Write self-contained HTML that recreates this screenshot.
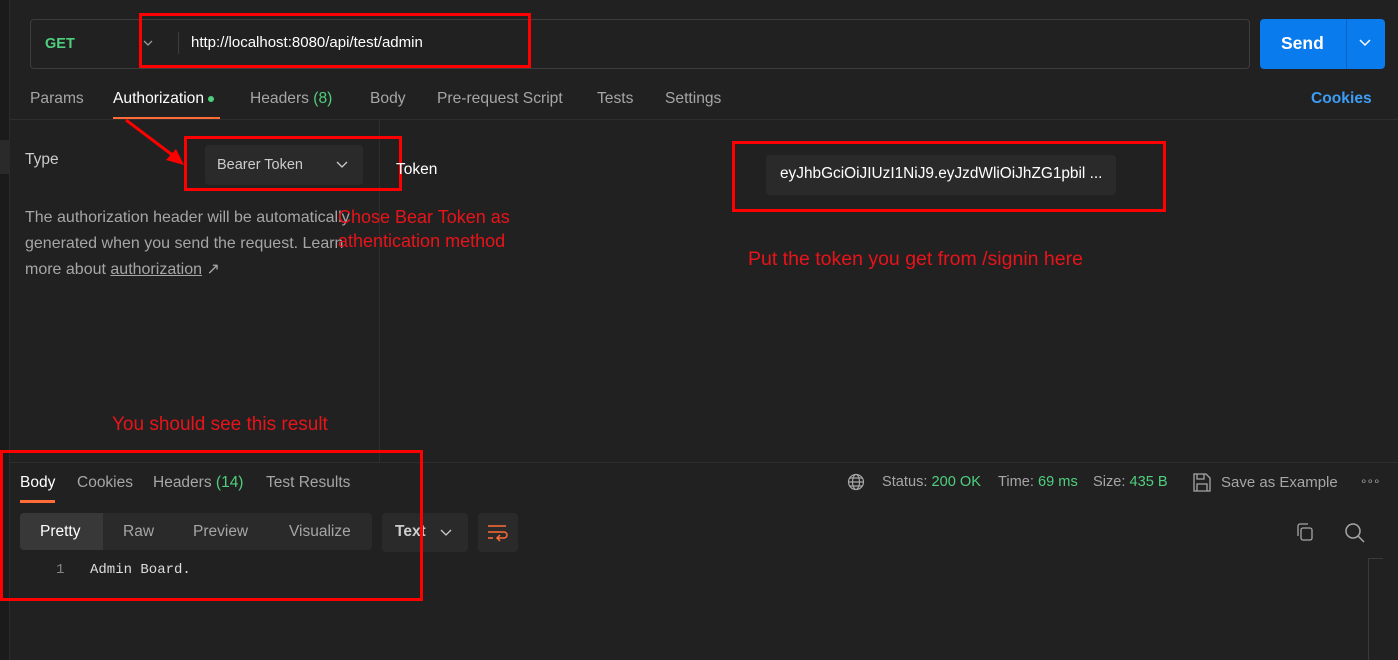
<!DOCTYPE html>
<html><head><style>
*{margin:0;padding:0;box-sizing:border-box}
body{width:1398px;height:660px;background:#212121;font-family:"Liberation Sans",sans-serif;color:#a6a6a6;position:relative;overflow:hidden;font-size:14px}
.a{position:absolute;white-space:nowrap}
.red{position:absolute;border:3px solid #f00}
.g{color:#4fcf7e}
.ann{position:absolute;color:#e8141a;white-space:nowrap}
.t{font-size:15.6px}
</style></head><body>
<div class="a" style="left:0;top:0;width:10px;height:660px;background:#1b1b1b;border-right:1px solid #2c2c2c"></div>
<div class="a" style="left:0;top:140px;width:10px;height:34px;background:#2a2a2a"></div>
<div class="a" style="left:30px;top:19px;width:1220px;height:50px;border:1px solid #3d3d3d;border-radius:4px"></div>
<div class="a" style="left:45px;top:36px;color:#4fcf7e;font-weight:bold;font-size:14.5px">GET</div>
<svg class="a" style="left:142px;top:38px" width="12" height="10" fill="none" stroke="#999" stroke-width="1.3"><path d="M2 3l4 4 4-4"/></svg>
<div class="a" style="left:178px;top:32px;width:1px;height:22px;background:#3d3d3d"></div>
<div class="a" style="left:191px;top:34px;color:#fff;font-size:15px">http://localhost:8080/api/test/admin</div>
<div class="red" style="left:139px;top:13px;width:392px;height:55px"></div>
<div class="a" style="left:1260px;top:19px;width:125px;height:50px;background:#097bed;border-radius:4px"></div>
<div class="a" style="left:1346px;top:19px;width:1px;height:50px;background:#0a64c0"></div>
<div class="a" style="left:1281px;top:33px;color:#fff;font-weight:bold;font-size:17.5px">Send</div>
<svg class="a" style="left:1358px;top:38px" width="14" height="10" fill="none" stroke="#fff" stroke-width="1.5"><path d="M2 2l5 5 5-5"/></svg>

<div class="a t" style="left:30px;top:90px">Params</div>
<div class="a t" style="left:113px;top:90px;color:#fff">Authorization <span style="display:inline-block;width:6px;height:6px;border-radius:3px;background:#4fcf7e;vertical-align:middle"></span></div>
<div class="a" style="left:113px;top:117px;width:107px;height:3px;background:#ff6c37"></div>
<div class="a t" style="left:250px;top:90px">Headers <span class="g">(8)</span></div>
<div class="a t" style="left:370px;top:90px">Body</div>
<div class="a t" style="left:437px;top:90px">Pre-request Script</div>
<div class="a t" style="left:597px;top:90px">Tests</div>
<div class="a t" style="left:665px;top:90px">Settings</div>
<div class="a t" style="left:1311px;top:90px;color:#3d9cf5;font-weight:bold">Cookies</div>
<div class="a" style="left:10px;top:119px;width:1388px;height:1px;background:#2e2e2e"></div>
<div class="a" style="left:379px;top:120px;width:1px;height:342px;background:#2e2e2e"></div>

<div class="a" style="left:25px;top:151px;font-size:15.5px;color:#ccc">Type</div>
<div class="a" style="left:205px;top:145px;width:158px;height:40px;background:#2a2a2a;border-radius:4px"></div>
<div class="a" style="left:217px;top:157px;font-size:14.5px;color:#ccc">Bearer Token</div>
<svg class="a" style="left:335px;top:160px" width="14" height="10" fill="none" stroke="#ccc" stroke-width="1.3"><path d="M2 2l5 5 5-5"/></svg>
<div class="red" style="left:184px;top:136px;width:218px;height:55px"></div>
<svg class="a" style="left:120px;top:115px" width="70" height="55"><line x1="6" y1="5" x2="55" y2="42" stroke="#f00" stroke-width="3"/><polygon points="64,50 46,45 56,34" fill="#f00"/></svg>
<div class="a" style="left:25px;top:205px;font-size:16px;line-height:26px;color:#a6a6a6">The authorization header will be automatically<br>generated when you send the request. Learn<br>more about <span style="text-decoration:underline">authorization</span> &#8599;</div>
<div class="ann" style="left:338px;top:205px;line-height:24px;font-size:18px">Chose Bear Token as<br>athentication method</div>

<div class="a" style="left:396px;top:161px;font-size:15.5px;color:#fff">Token</div>
<div class="a" style="left:766px;top:155px;width:350px;height:40px;background:#2a2a2a;border-radius:4px"></div>
<div class="a" style="left:780px;top:165px;font-size:15.4px;color:#fff">eyJhbGciOiJIUzI1NiJ9.eyJzdWliOiJhZG1pbil ...</div>
<div class="red" style="left:732px;top:141px;width:434px;height:71px"></div>
<div class="ann" style="left:748px;top:248px;font-size:19.5px">Put the token you get from /signin here</div>
<div class="ann" style="left:112px;top:414px;font-size:19px">You should see this result</div>

<div class="a" style="left:10px;top:462px;width:1388px;height:1px;background:#2e2e2e"></div>
<div class="a" style="left:20px;top:474px;font-size:15.5px;color:#fff">Body</div>
<div class="a" style="left:20px;top:500px;width:35px;height:3px;background:#ff6c37"></div>
<div class="a" style="left:77px;top:474px;font-size:15.5px">Cookies</div>
<div class="a" style="left:153px;top:474px;font-size:15.5px">Headers <span class="g">(14)</span></div>
<div class="a" style="left:266px;top:474px;font-size:15.5px">Test Results</div>
<div class="a" style="left:20px;top:513px;width:352px;height:37px;background:#2a2a2a;border-radius:4px"></div>
<div class="a" style="left:20px;top:513px;width:83px;height:37px;background:#383838;border-radius:4px 0 0 4px"></div>
<div class="a" style="left:40px;top:523px;font-size:15.5px;color:#fff">Pretty</div>
<div class="a" style="left:123px;top:523px;font-size:15.5px">Raw</div>
<div class="a" style="left:193px;top:523px;font-size:15.5px">Preview</div>
<div class="a" style="left:289px;top:523px;font-size:15.5px">Visualize</div>
<div class="a" style="left:382px;top:513px;width:86px;height:39px;background:#2a2a2a;border-radius:4px"></div>
<div class="a" style="left:395px;top:523px;font-size:15.5px;color:#ccc;font-weight:bold">Text</div>
<svg class="a" style="left:439px;top:528px" width="14" height="10" fill="none" stroke="#ccc" stroke-width="1.3"><path d="M2 2l5 5 5-5"/></svg>
<div class="a" style="left:478px;top:513px;width:40px;height:39px;background:#2a2a2a;border-radius:4px"></div>
<svg class="a" style="left:486px;top:522px" width="24" height="22" fill="none" stroke="#ff6c37" stroke-width="1.5"><path d="M2 4h18M2 10h16a3 3 0 010 6h-6M2 16h5M14 13l-3 3 3 3"/></svg>
<div class="a" style="left:56px;top:562px;font-family:'Liberation Mono',monospace;font-size:14px;color:#888">1</div>
<div class="a" style="left:90px;top:562px;font-family:'Liberation Mono',monospace;font-size:14px;color:#ddd">Admin Board.</div>
<div class="red" style="left:0;top:450px;width:423px;height:151px"></div>

<svg class="a" style="left:847px;top:473px" width="18" height="18" fill="none" stroke="#a6a6a6" stroke-width="1.2"><circle cx="9" cy="9" r="7.5"/><ellipse cx="9" cy="9" rx="3.5" ry="7.5"/><path d="M1.5 9h15M3 5h12M3 13h12"/></svg>
<div class="a" style="left:882px;top:474px;font-size:14.6px">Status: <span class="g">200 OK</span></div>
<div class="a" style="left:998px;top:474px;font-size:14.6px">Time: <span class="g">69 ms</span></div>
<div class="a" style="left:1093px;top:474px;font-size:14.6px">Size: <span class="g">435 B</span></div>
<svg class="a" style="left:1193px;top:473px" width="18" height="19" fill="none" stroke="#a6a6a6" stroke-width="1.3"><path d="M1 1h12l4 4v13H1z M4 1v5h7V1 M4 18v-7h10v7"/></svg>
<div class="a" style="left:1221px;top:474px;font-size:15px">Save as Example</div>
<div class="a" style="left:1360px;top:474px;font-size:12px;letter-spacing:-1px">&#8728;&#8728;&#8728;</div>
<svg class="a" style="left:1295px;top:522px" width="20" height="20" fill="none" stroke="#a6a6a6" stroke-width="1.3"><rect x="6" y="6" width="11" height="12" rx="2"/><path d="M3 14V4a2 2 0 012-2h8"/></svg>
<svg class="a" style="left:1344px;top:522px" width="22" height="22" fill="none" stroke="#a6a6a6" stroke-width="1.5"><circle cx="9" cy="9" r="7"/><path d="M14 14l6 6"/></svg>
<div class="a" style="left:1368px;top:558px;width:1px;height:102px;background:#3a3a3a"></div>
<div class="a" style="left:1368px;top:558px;width:15px;height:1px;background:#3a3a3a"></div>
</body></html>
